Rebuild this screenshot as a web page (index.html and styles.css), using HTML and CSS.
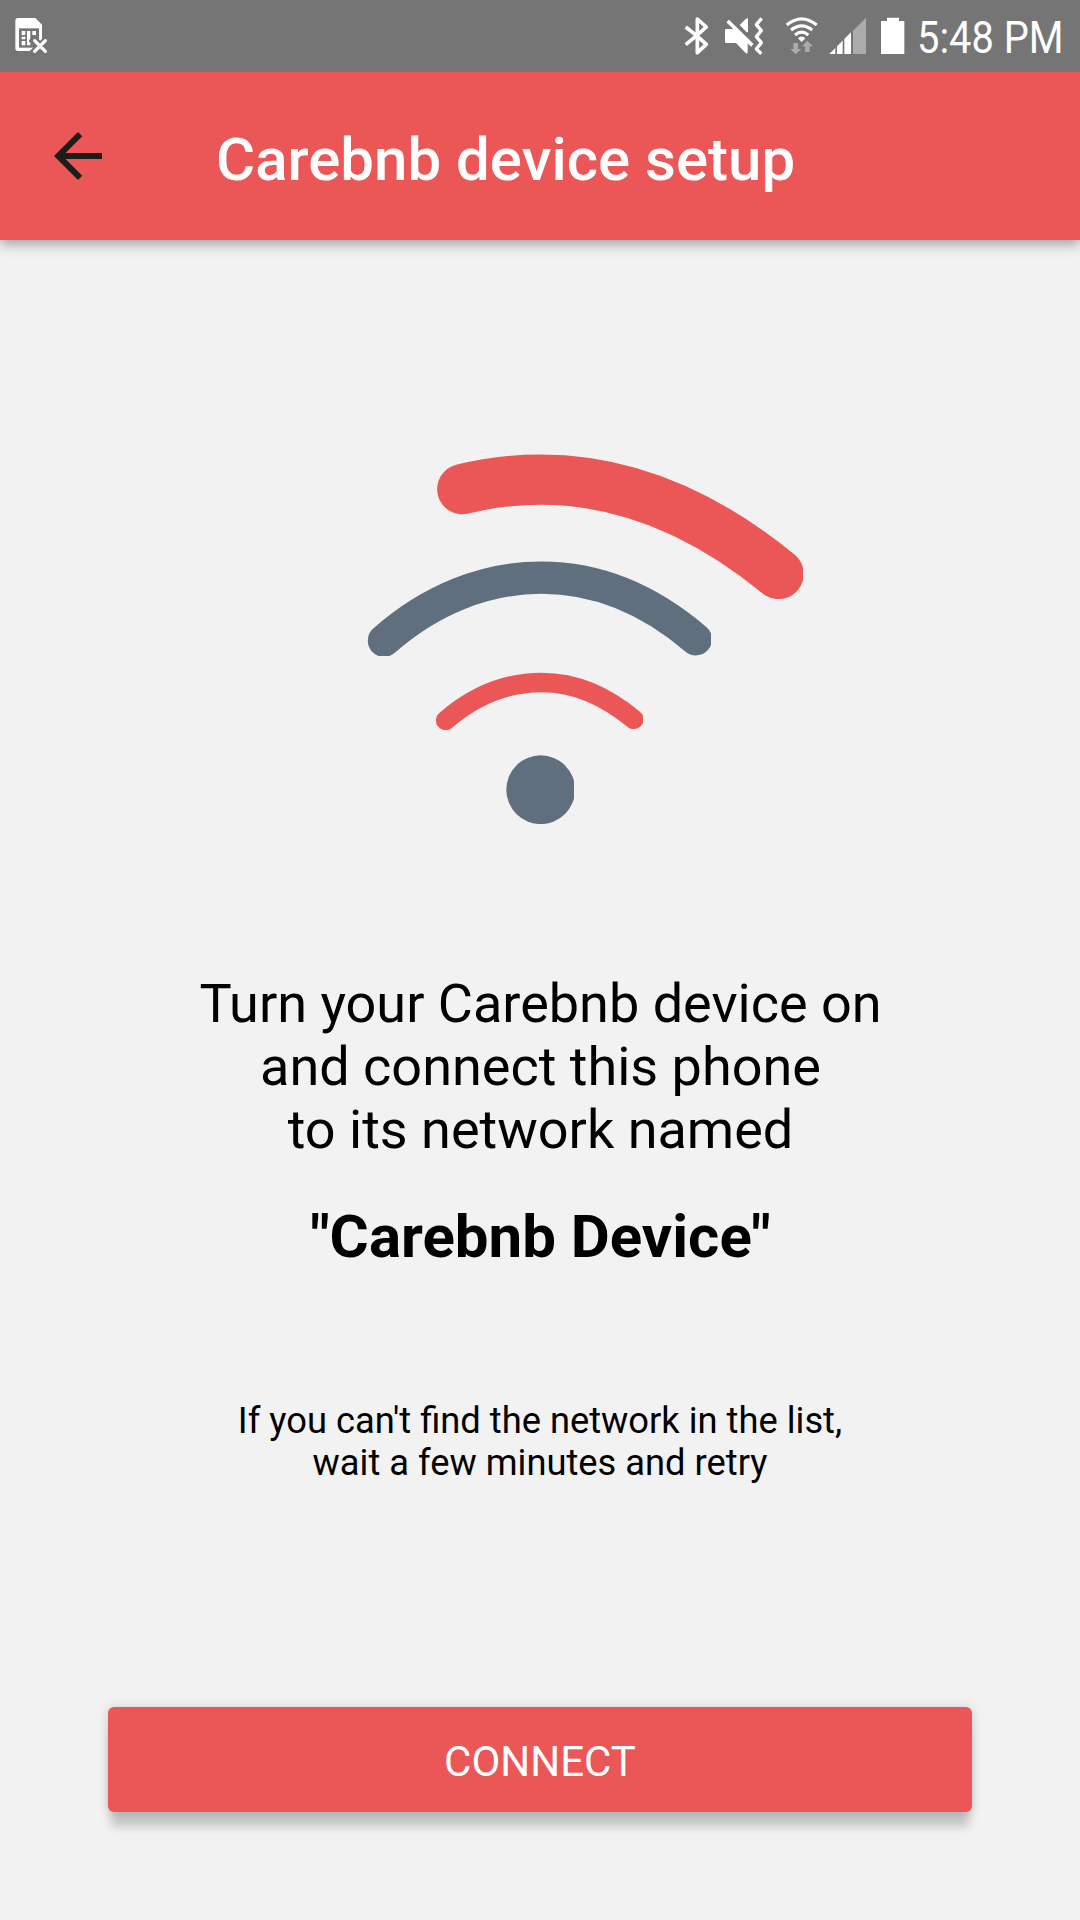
FILE: index.html
```html
<!DOCTYPE html>
<html lang="en">
<head>
<meta charset="utf-8">
<title>Carebnb device setup</title>
<link rel="stylesheet" href="styles.css">
</head>
<body>
<div class="status-bar">
  <svg class="status-icon" width="36" height="42" viewBox="42 42 108 126">
    <path fill="#fff" d="M54 54H106L126 74V145Q126 153 118 153H54Q46 153 46 145V62Q46 54 54 54Z"/>
    <path fill="#757575" d="M57 85H117V143H57Z"/>
    <path fill="#fff" d="M65 93H76V105H65ZM65 110H76V118H65ZM65 123H76V136H65ZM81 93H91V115L86 124L91 128V136H81ZM97 93H108V105H97Z"/>
    <path stroke="#757575" stroke-width="22" d="M97 114L144 161M144 114L97 161"/>
    <path stroke="#fff" stroke-width="10" stroke-linecap="round" d="M104 122L136 154M136 122L104 154"/>
  </svg>
  <div class="status-right">
    <svg width="35" height="42" viewBox="36 42 105 126">
      <path fill="none" stroke="#fff" stroke-width="11" stroke-linejoin="round" d="M47 81L80 107L109 133L82 158V57L109 81L80 107L47 134"/>
    </svg>
    <svg width="60" height="42" viewBox="141 42 180 126">
      <path fill="#fff" d="M169 87H192L233 127V157Q232 163 227 159L198 129H169Q165 129 165 125V91Q165 87 169 87ZM209 75L228 56Q234 53 234 59V96Q230 98 227 94Z"/>
      <path fill="none" stroke="#fff" stroke-width="11" d="M173 63L247 136"/>
      <path fill="none" stroke="#fff" stroke-width="10" stroke-linejoin="round" d="M275 55L259 74L274 92L259 110L274 128L259 147L274 161"/>
    </svg>
    <svg width="47" height="42" viewBox="321 42 141 126">
      <path fill="none" stroke="#fff" stroke-width="9" d="M350 75Q395 38 440 75M363 90Q395 65 427 90M375 105Q395 88 415 105"/>
      <path fill="#fff" d="M384 115Q395 104 406 115L395 126Z"/>
      <path fill="#ababab" d="M370 129H384V147H394L377 163L361 147H370ZM405 156V139H396L412 122L429 139H419V156Z"/>
    </svg>
    <svg width="50" height="42" viewBox="462 42 150 126">
      <path fill="#ababab" d="M543 98L588 53V162H543Z"/>
      <path fill="#fff" d="M478 162L543 97V162Z"/>
      <path fill="#757575" d="M496 130H501V162H496ZM518 110H523V162H518ZM543 80H549V162H543Z"/>
    </svg>
    <svg width="36" height="42" viewBox="612 42 108 126">
      <path fill="#fff" d="M633 63H651V53H687V63H703V162H633Z"/>
    </svg>
    <span class="clock">5:48 PM</span>
  </div>
</div>
<header class="app-bar">
  <svg class="back" width="72" height="72" viewBox="0 0 24 24">
    <path fill="#1c1c1c" d="M20 11H7.83l5.59-5.59L12 4l-8 8 8 8 1.41-1.41L7.83 13H20v-2z"/>
  </svg>
  <h1 class="title">Carebnb device setup</h1>
</header>
<main class="content">
  <svg class="wifi" width="540" height="370" viewBox="270 454 540 370" fill="none" stroke-linecap="round">
    <clipPath id="outer"><path d="M430 450H803V599H430Z"/></clipPath>
    <clipPath id="middle"><path d="M360 550H711V656H360Z"/></clipPath>
    <clipPath id="inner"><path d="M430 660H643V730H430Z"/></clipPath>
    <clipPath id="dot"><path d="M500 755H574V824H500Z"/></clipPath>
    <path clip-path="url(#outer)" stroke="#eb5757" stroke-width="50.3" d="M462.3 489.2Q500 479.6 541 479.6C620 479.6 698 508 778.6 574"/>
    <path clip-path="url(#middle)" stroke="#5f6f7d" stroke-width="32.4" d="M384 640.7C430 600 485 577.6 541.5 577.6S650 600 695.8 639.2"/>
    <path clip-path="url(#inner)" stroke="#eb5757" stroke-width="19.6" d="M445.7 720.4C474 696 507 682.5 541.5 682.5S605 696 633.8 719.3"/>
    <circle clip-path="url(#dot)" cx="540.7" cy="789.7" r="34.4" fill="#5f6f7d"/>
  </svg>
  <p class="instructions">Turn your Carebnb device on<br>and connect this phone<br>to its network named</p>
  <p class="network">"Carebnb Device"</p>
  <p class="hint">If you can't find the network in the list,<br>wait a few minutes and retry</p>
  <button class="connect">CONNECT</button>
</main>
</body>
</html>
```
FILE: styles.css
```css
* { box-sizing: border-box; }
body {
  margin: 0;
  width: 1080px;
  height: 1920px;
  display: flex;
  flex-direction: column;
  overflow: hidden;
  background: #f2f2f2;
  color: #000;
  font-family: Roboto, "Liberation Sans", sans-serif;
}
svg { display: block; flex: none; }
.status-bar {
  position: relative;
  z-index: 1;
  height: 72px;
  flex: none;
  display: flex;
  justify-content: space-between;
  align-items: flex-start;
  padding: 14px 0 0 14px;
  background: #757575;
}
.status-right { display: flex; width: 398px; }
.clock {
  padding: 1px 0 0 8px;
  font-size: 45px;
  line-height: 46px;
  color: #fff;
  white-space: nowrap;
  transform: scaleX(0.885);
  transform-origin: left;
}
.app-bar {
  height: 168px;
  flex: none;
  display: flex;
  align-items: center;
  padding: 0 42px;
  background: #eb5757;
  box-shadow: 0 4px 12px rgba(0, 0, 0, 0.35);
}
.title {
  margin: 7px 0 0 102px;
  font-size: 60px;
  line-height: 70px;
  font-weight: 500;
  color: #fff;
}
.content {
  display: flex;
  flex-direction: column;
  align-items: center;
  padding: 214px 108px 0;
  text-align: center;
}
p { margin: 0; }
.instructions { margin-top: 148px; padding-left: 1px; font-size: 54px; line-height: 63px; }
.network { margin-top: 41px; padding-left: 1px; font-size: 60px; line-height: 70px; font-weight: 700; }
.hint { margin-top: 128px; font-size: 36.3px; line-height: 42px; }
.connect {
  width: 864px;
  height: 105px;
  margin-top: 223px;
  padding: 4px 0 0;
  border: 0;
  border-radius: 6px;
  background: #eb5757;
  box-shadow: 0 18px 10px -3px rgba(0, 0, 0, 0.18), 0 1px 12px rgba(0, 0, 0, 0.16);
  color: #fff;
  font: 400 42px Roboto, "Liberation Sans", sans-serif;
}
```
